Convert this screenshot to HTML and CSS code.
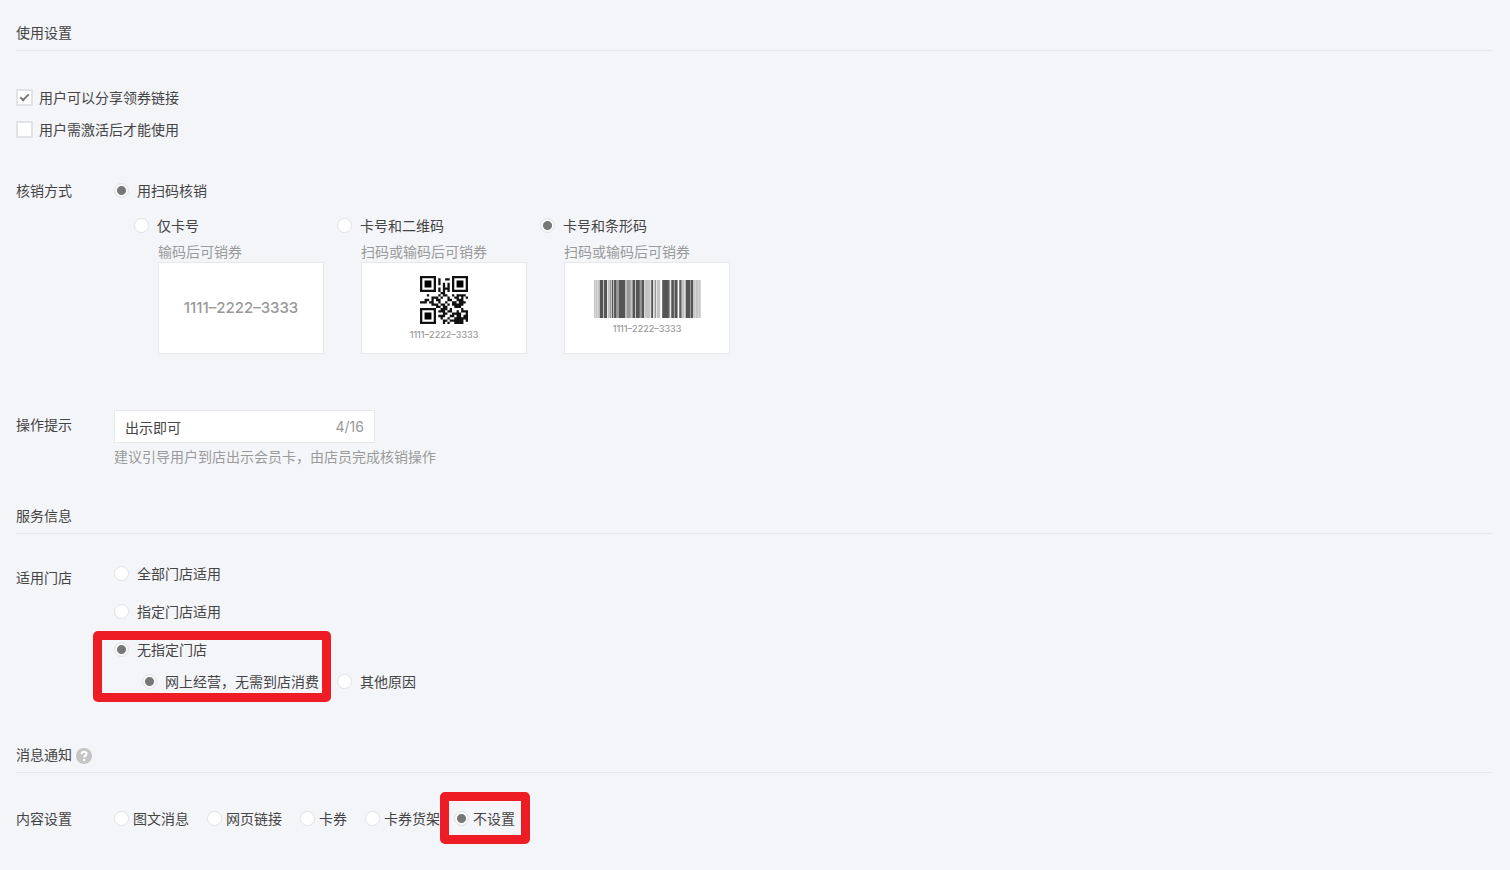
FILE: index.html
```html
<!DOCTYPE html>
<html lang="zh-CN">
<head>
	<meta charset="UTF-8">
	<meta name="viewport" content="width=device-width, initial-scale=1.0">
	<title>使用设置</title>
	<link rel="stylesheet" href="styles.css">
</head>
<body>
	<form class="settings">
		<section class="section">
			<h2 class="title">使用设置</h2>
			<div class="checks">
				<label class="option check"><input type="checkbox" name="share" checked> 用户可以分享领券链接</label>
				<label class="option check"><input type="checkbox" name="activate"> 用户需激活后才能使用</label>
			</div>
			<div class="row">
				<span class="name">核销方式</span>
				<div class="field">
					<label class="option"><input type="radio" name="verify" checked> 用扫码核销</label>
					<div class="codes">
						<div class="code">
							<label class="option"><input type="radio" name="code"> 仅卡号</label>
							<p class="hint">输码后可销券</p>
							<div class="card">
								<span class="number-big">1111–2222–3333</span>
							</div>
						</div>
						<div class="code">
							<label class="option"><input type="radio" name="code"> 卡号和二维码</label>
							<p class="hint">扫码或输码后可销券</p>
							<div class="card">
								<svg class="qrcode" viewBox="0 0 21 21">
									<path d="M0 0h7v7h-7zM1 1v5h5v-5zM14 0h7v7h-7zM15 1v5h5v-5zM0 14h7v7h-7zM1 15v5h5v-5z" fill="#111" fill-rule="evenodd"/>
									<path d="M2 2h3v3h-3zM16 2h3v3h-3zM2 16h3v3h-3z" fill="#000"/>
									<path d="M8 1.5h1M11 1.5h2M8 2.5h1M8 3.5h1M10 3.5h1M12 3.5h1M10 4.5h1M12 4.5h1M8 5.5h1M10 5.5h3M8 6.5h1M10 6.5h1M12 6.5h1M9 7.5h2M3 8.5h1M8 8.5h1M10 8.5h2M14 8.5h1M16 8.5h4M5 9.5h3M9 9.5h1M12 9.5h1M15 9.5h2M18 9.5h1M20 9.5h1M2 10.5h2M5 10.5h1M7 10.5h2M12 10.5h2M16 10.5h3M0 11.5h3M4 11.5h2M8 11.5h1M11 11.5h1M14 11.5h2M17 11.5h3M5 12.5h3M9 12.5h2M12 12.5h1M14 12.5h5M7 13.5h2M10 13.5h2M15 13.5h3M9 14.5h3M13 14.5h1M18 14.5h1M8 15.5h3M12 15.5h2M16 15.5h1M18 15.5h3M10 16.5h2M14 16.5h4M20 16.5h1M8 17.5h3M13 17.5h2M16 17.5h2M19 17.5h2M9 18.5h1M12 18.5h1M15 18.5h6M10 19.5h2M13 19.5h6M20 19.5h1M10 20.5h1M12 20.5h1M15 20.5h4" stroke="#111" fill="none"/>
								</svg>
								<span class="number">1111–2222–3333</span>
							</div>
						</div>
						<div class="code">
							<label class="option"><input type="radio" name="code" checked> 卡号和条形码</label>
							<p class="hint">扫码或输码后可销券</p>
							<div class="card card-bar">
								<svg class="barcode" viewBox="0 0 320 114" preserveAspectRatio="none">
									<path d="M0 0h4v114h-4zM5 0h5v114h-5zM11 0h5v114h-5zM41 0h6v114h-6zM93 0h4v114h-4zM152 0h17v114h-17zM188 0h10v114h-10zM264 0h7v114h-7zM299 0h5v114h-5zM305 0h6v114h-6zM312 0h7v114h-7z" fill="#c4c4c4"/>
									<path d="M47 0h4v114h-4zM67 0h7v114h-7zM97 0h13v114h-13zM112 0h4v114h-4zM137 0h5v114h-5zM181 0h5v114h-5zM224 0h4v114h-4zM239 0h3v114h-3zM260 0h4v114h-4zM287 0h3v114h-3z" fill="#999"/>
									<path d="M17 0h11v114h-11zM30 0h9v114h-9zM53 0h5v114h-5zM60 0h7v114h-7zM74 0h19v114h-19zM116 0h7v114h-7zM125 0h12v114h-12zM142 0h8v114h-8zM171 0h6v114h-6zM204 0h20v114h-20zM231 0h8v114h-8zM242 0h8v114h-8zM255 0h5v114h-5zM274 0h13v114h-13zM290 0h7v114h-7z" fill="#555"/>
								</svg>
								<span class="number">1111–2222–3333</span>
							</div>
						</div>
					</div>
				</div>
			</div>
			<div class="row row-tip">
				<label class="name" for="tip">操作提示</label>
				<div class="field">
					<div class="textbox">
						<input type="text" id="tip" value="出示即可" maxlength="16">
						<span class="count">4/16</span>
					</div>
					<p class="hint">建议引导用户到店出示会员卡，由店员完成核销操作</p>
				</div>
			</div>
		</section>

		<section class="section">
			<h2 class="title">服务信息</h2>
			<div class="row row-shop">
				<span class="name">适用门店</span>
				<div class="field shops">
					<label class="option"><input type="radio" name="shop"> 全部门店适用</label>
					<label class="option"><input type="radio" name="shop"> 指定门店适用</label>
					<div class="no-shop">
						<label class="option"><input type="radio" name="shop" checked> 无指定门店</label>
						<div class="reasons">
							<label class="option"><input type="radio" name="reason" checked> 网上经营，无需到店消费</label>
							<label class="option"><input type="radio" name="reason"> 其他原因</label>
						</div>
						<div class="mark mark-shop"></div>
					</div>
				</div>
			</div>
		</section>

		<section class="section">
			<h2 class="title">消息通知
				<svg class="help" viewBox="0 0 16 16">
					<circle cx="8" cy="8" r="8" fill="#c4c4c4"/>
					<path d="M5.5 6.2c0-1.6 1-2.5 2.5-2.5s2.5.9 2.5 2.2c0 1.7-2.3 1.8-2.3 3.6" fill="none" stroke="#fff" stroke-width="2"/>
					<circle cx="8.2" cy="11.9" r="1.2" fill="#fff"/>
				</svg>
			</h2>
			<div class="row row-content">
				<span class="name">内容设置</span>
				<div class="field contents">
					<label class="option"><input type="radio" name="content"> 图文消息</label>
					<label class="option"><input type="radio" name="content"> 网页链接</label>
					<label class="option"><input type="radio" name="content"> 卡券</label>
					<label class="option"><input type="radio" name="content"> 卡券货架</label>
					<div class="unset">
						<label class="option"><input type="radio" name="content" checked> 不设置</label>
						<div class="mark mark-unset"></div>
					</div>
				</div>
			</div>
		</section>
	</form>
</body>
</html>
```
FILE: styles.css
```css
* {
	margin: 0;
	padding: 0;
	box-sizing: border-box;
}
body {
	background-color: #f4f5f9;
	color: #444;
	font-family: "Noto Sans CJK SC", sans-serif;
	font-size: 14px;
	line-height: 22px;
}
.settings {
	padding: 21px 18px 32px 16px;
}
.title {
	display: flex;
	align-items: center;
	gap: 4px;
	padding-bottom: 7px;
	border-bottom: 1px solid #e7e8eb;
	font-size: 14px;
	font-weight: normal;
}
.row {
	display: flex;
}
.name {
	width: 98px;
	flex-shrink: 0;
}
.option {
	display: flex;
	align-items: center;
	gap: 8px;
	white-space: nowrap;
}
.hint {
	color: #9a9a9a;
}

/* radio, checkbox */
input[type="radio"], input[type="checkbox"] {
	appearance: none;
	flex-shrink: 0;
	background-color: white;
}
input[type="radio"] {
	width: 15px;
	height: 15px;
	border: 1px solid #e0e1e5;
	border-radius: 50%;
}
input[type="radio"]:checked {
	background-color: #f8f8f9;
	background-image: radial-gradient(circle, #777 4px, transparent 5px);
}
input[type="checkbox"] {
	width: 17px;
	height: 17px;
	border: 2px solid #e2e3e6;
}
input[type="checkbox"]:checked::before {
	content: "";
	display: block;
	width: 7px;
	height: 3px;
	margin: 3px 0 0 2px;
	border: solid #777;
	border-width: 0 0 2px 2px;
	transform: rotate(-45deg);
}
.checks {
	display: flex;
	flex-direction: column;
	gap: 10px;
	padding: 35px 0 39px;
}
.check {
	gap: 6px;
}

.codes {
	display: grid;
	grid-template-columns: repeat(3, 203px);
	padding: 13px 0 0 20px;
}
.code .hint {
	margin: 5px 0 0 24px;
	line-height: 21px;
}
.card {
	display: flex;
	flex-direction: column;
	align-items: center;
	width: 166px;
	height: 92px;
	margin-left: 24px;
	padding-top: 13px;
	background-color: white;
	border: 1px solid #e7e8eb;
	color: #999;
	font-family: Inter, sans-serif;
}
.card-bar {
	padding-top: 17px;
}
.number-big {
	margin: auto;
	padding-bottom: 13px;
	font-size: 15px;
	font-weight: 500;
}
.number {
	font-size: 9px;
	font-weight: 500;
	line-height: 22px;
}
.qrcode {
	width: 48px;
	height: 48px;
}
.barcode {
	width: 107px;
	height: 38px;
}

.row-tip {
	padding: 56px 0 37px;
}
.row-tip .name {
	padding-top: 3px;
}
.textbox {
	display: flex;
	align-items: center;
	width: 261px;
	height: 33px;
	margin-bottom: 2px;
	padding: 0 10px;
	background-color: white;
	border: 1px solid #e7e8eb;
}
.textbox input {
	flex: 1;
	min-width: 0;
	border: none;
	outline: none;
	color: #444;
	font: inherit;
}
.count {
	color: #999;
	font-family: Inter, sans-serif;
}

.row-shop {
	padding: 28px 0 51px;
}
.row-shop .name {
	padding-top: 4px;
}
.shops {
	display: flex;
	flex-direction: column;
	gap: 16px;
}
.no-shop, .unset {
	position: relative;
}
.reasons {
	display: flex;
	gap: 18px;
	padding: 10px 0 0 28px;
}
.help {
	width: 16px;
	height: 16px;
	margin-top: 4px;
}
.row-content {
	padding-top: 34px;
}
.contents {
	display: flex;
	gap: 18px;
}
.contents .option {
	gap: 4px;
}
.unset {
	margin-left: -4px;
}

.mark {
	position: absolute;
	border: 9px solid #ee1c25;
	border-radius: 5px;
	pointer-events: none;
}
.mark-shop {
	top: -7px;
	left: -21px;
	width: 238px;
	height: 71px;
}
.mark-unset {
	top: -15px;
	left: -14px;
	width: 90px;
	height: 52px;
}
```
